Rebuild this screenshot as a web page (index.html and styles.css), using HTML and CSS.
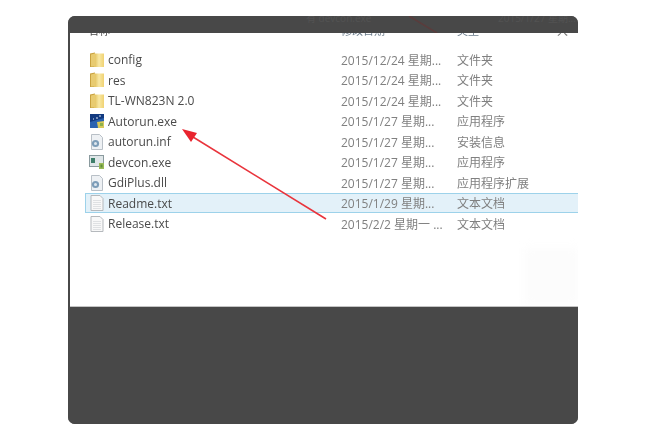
FILE: index.html
```html
<!DOCTYPE html>
<html lang="zh-CN">
<head>
<meta charset="utf-8">
<title>Autorun</title>
<link rel="stylesheet" href="styles.css">
</head>
<body>
<svg class="defs" width="0" height="0" aria-hidden="true">
  <defs>
    <linearGradient id="fold" x1="0" x2="1" y1="0" y2="0">
      <stop offset="0" stop-color="#e0bd55"/><stop offset="0.5" stop-color="#f8e8a4"/><stop offset="1" stop-color="#f0d273"/>
    </linearGradient>
    <symbol id="folder" viewBox="0 0 16 16">
      <path d="M1 1.5 L6 .5 L6 15 L1 15 Z" fill="#c9a23f"/>
      <path d="M5 1.5 L15 1.5 L15 15 L5 15 Z" fill="url(#fold)"/>
      <path d="M2 2.5 L6 1.5 L6 14.5 L2 14.5 Z" fill="#e8cb70"/>
    </symbol>
    <symbol id="doc" viewBox="0 0 16 16">
      <path d="M2 .5 H11 L14 3.5 V15.5 H2 Z" fill="#f8f8f8" stroke="#b5b9bd"/>
      <path d="M4 5.5H12M4 7.5H12M4 9.5H12M4 11.5H12M4 13.5H12" stroke="#dfe1e3"/>
    </symbol>
    <symbol id="gear" viewBox="0 0 16 16">
      <path d="M2.5 .5 H10.5 L13.5 3.5 V15.5 H2.5 Z" fill="#eef1f4" stroke="#b9c0c7"/>
      <circle cx="6.5" cy="9.5" r="3.6" fill="#7d9db8"/>
      <circle cx="6.5" cy="9.5" r="1.5" fill="#dfe7ee"/>
    </symbol>
  </defs>
</svg>
<main class="card">
  <div class="topbar">
    <span class="ghost ghost-name">有 devcon.exe</span>
    <span class="ghost ghost-date">2015/1/27 星期...</span>
    <svg class="ghost-line" width="30" height="17" viewBox="0 0 30 17" aria-hidden="true"><path d="M0 0 L28 17" stroke="#5a3c3c" stroke-width="1.5"/></svg>
  </div>
  <section class="shot">
    <div class="blur">
      <div class="head">
        <span class="cell-name head-name">名称</span>
        <span class="cell-date">修改日期</span>
        <span class="cell-type">类型</span>
        <span class="cell-more">大</span>
      </div>
      <ul class="list">
        <li class="row"><svg class="icon"><use href="#folder"/></svg><span class="cell-name">config</span><span class="cell-date">2015/12/24 星期...</span><span class="cell-type">文件夹</span></li>
        <li class="row"><svg class="icon"><use href="#folder"/></svg><span class="cell-name">res</span><span class="cell-date">2015/12/24 星期...</span><span class="cell-type">文件夹</span></li>
        <li class="row"><svg class="icon"><use href="#folder"/></svg><span class="cell-name">TL-WN823N 2.0</span><span class="cell-date">2015/12/24 星期...</span><span class="cell-type">文件夹</span></li>
        <li class="row"><svg class="icon" viewBox="0 0 16 16"><rect x="1" y="1" width="14" height="14" fill="#2a62b0"/><path d="M1 1H15V5L1 9Z" fill="#123a80"/><path d="M4 6h1M7 5h2M10 3h2" stroke="#dfeaf6" stroke-width="1"/><path d="M8 9 L15 8 L15 15 L9 15 Z" fill="#d8c95a"/><path d="M11 10h3v3h-3z" fill="#8fb04a"/></svg><span class="cell-name">Autorun.exe</span><span class="cell-date">2015/1/27 星期...</span><span class="cell-type">应用程序</span></li>
        <li class="row"><svg class="icon"><use href="#gear"/></svg><span class="cell-name">autorun.inf</span><span class="cell-date">2015/1/27 星期...</span><span class="cell-type">安装信息</span></li>
        <li class="row"><svg class="icon" viewBox="0 0 16 16"><rect x=".5" y="1.5" width="14" height="11" fill="#dfe6e8" stroke="#8a9a9e"/><rect x="2" y="4" width="4" height="5" fill="#3e7f6a"/><path d="M10 9 L15 9 L15 15 L10 15 Z" fill="#9bbb58"/><path d="M11.5 10.5h2v3h-2z" fill="#5f8f3a"/></svg><span class="cell-name">devcon.exe</span><span class="cell-date">2015/1/27 星期...</span><span class="cell-type">应用程序</span></li>
        <li class="row"><svg class="icon"><use href="#gear"/></svg><span class="cell-name">GdiPlus.dll</span><span class="cell-date">2015/1/27 星期...</span><span class="cell-type">应用程序扩展</span></li>
        <li class="row selected"><svg class="icon"><use href="#doc"/></svg><span class="cell-name">Readme.txt</span><span class="cell-date">2015/1/29 星期...</span><span class="cell-type">文本文档</span></li>
        <li class="row"><svg class="icon"><use href="#doc"/></svg><span class="cell-name">Release.txt</span><span class="cell-date">2015/2/2 星期一 ...</span><span class="cell-type">文本文档</span></li>
      </ul>
    </div>
    <svg class="arrow" width="160" height="100" viewBox="0 0 160 100" aria-hidden="true">
      <path d="M147 94 L14 12" stroke="#e9343c" stroke-width="1.6" fill="none"/>
      <path d="M3 4 L18 8 L12 17 Z" fill="#e9242e"/>
    </svg>
    <div class="patch"></div>
  </section>
  <div class="bottombar"></div>
</main>
</body>
</html>
```

FILE: styles.css
```css
* { box-sizing: border-box; }
html, body { margin: 0; padding: 0; background: #fff; }
body {
  width: 647px;
  height: 445px;
  padding: 16px 69px 21px 68px;
  font-family: "Open Sans", "Noto Sans CJK SC", sans-serif;
  font-size: 12px;
  overflow: hidden;
}
.defs { position: absolute; }
.card {
  height: 408px;
  display: flex;
  flex-direction: column;
  background: #484848;
  border-radius: 7px;
  overflow: hidden;
}
.topbar {
  position: relative;
  height: 17px;
  flex: none;
  overflow: hidden;
  background: #484848;
}
.ghost { position: absolute; top: -6px; font-size: 10px; color: #535353; white-space: nowrap; }
.ghost-name { left: 238px; }
.ghost-date { left: 430px; }
.ghost-line { position: absolute; left: 341px; top: 0; }
.shot {
  position: relative;
  flex: none;
  height: 274px;
  margin-left: 2px;
  background: #fff;
  border-bottom: 1px solid #c4c4c4;
  overflow: hidden;
}
.blur { filter: blur(0.5px); }
.head {
  display: flex;
  height: 18.4px;
  margin-top: -2px;
  padding-left: 18px;
  align-items: flex-start;
  line-height: 0;
  color: #6d7d8c;
  font-size: 11px;
}
.head .cell-name { width: 253px; }
.head-name { color: #777; }
.cell-more { color: #777; }
.list { list-style: none; margin: 0; padding: 0 0 0 15px; }
.row {
  display: flex;
  align-items: center;
  height: 20.5px;
  padding-left: 3px;
  color: #808080;
  border: 1px solid transparent;
  border-right: 0;
  white-space: nowrap;
}
.row.selected { background: #e3f1f9; border-color: #9dd2ea; }
.icon { width: 16px; height: 16px; flex: none; margin-right: 3px; }
.cell-name { width: 233px; color: #4a4a4a; }
.cell-date { width: 116px; flex: none; }
.cell-type { width: 100px; flex: none; }
.arrow { position: absolute; left: 109px; top: 92px; }
.patch {
  position: absolute;
  left: 455px;
  top: 215px;
  width: 53px;
  height: 57px;
  background: #fcfcfc;
  filter: blur(4px);
}
.bottombar { flex: 1; background: #484848; }
```
